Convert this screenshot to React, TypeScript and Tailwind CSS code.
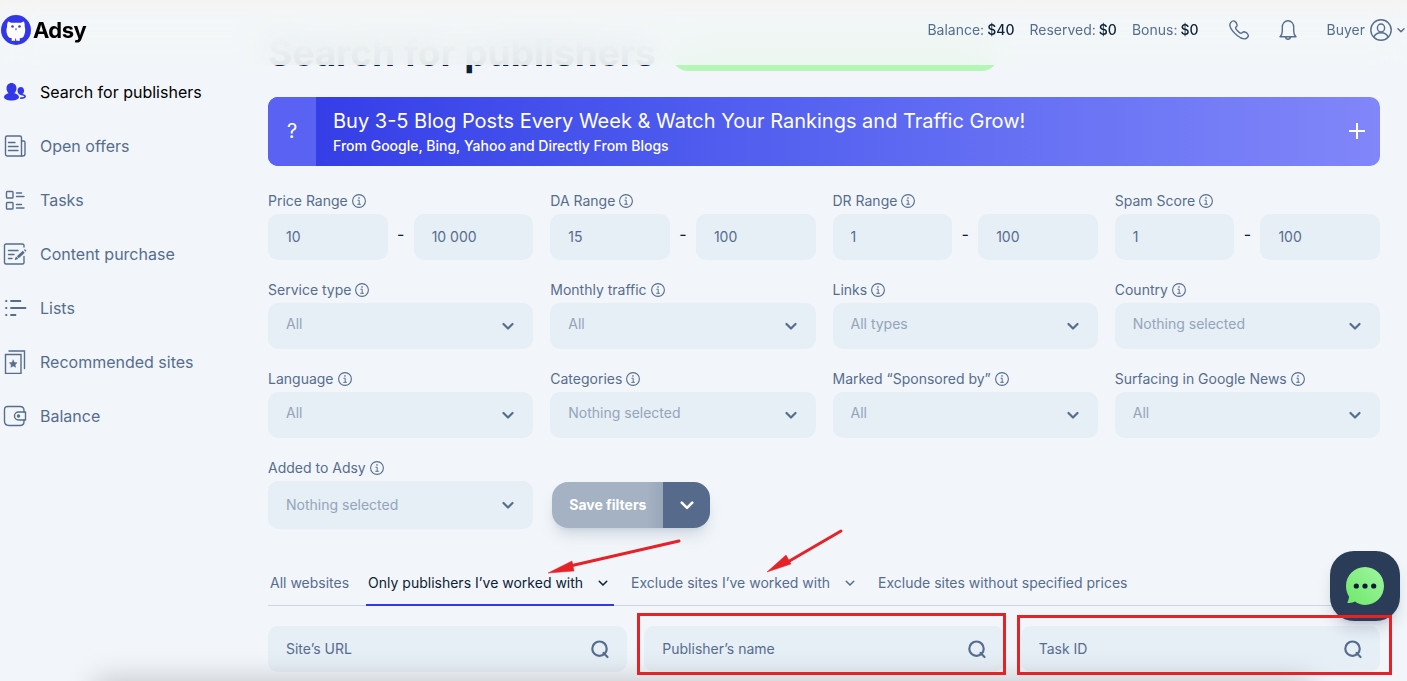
import type { ReactNode } from "react"

const navItems = [
  { label: "Search for publishers", icon: <PeopleIcon />, active: true },
  { label: "Open offers", icon: <OffersIcon /> },
  { label: "Tasks", icon: <TasksIcon /> },
  { label: "Content purchase", icon: <ContentIcon /> },
  { label: "Lists", icon: <ListsIcon /> },
  { label: "Recommended sites", icon: <RecommendedIcon /> },
  { label: "Balance", icon: <WalletIcon /> },
]

const ranges = [
  { id: "price", label: "Price Range", from: "10", to: "10 000" },
  { id: "da", label: "DA Range", from: "15", to: "100" },
  { id: "dr", label: "DR Range", from: "1", to: "100" },
  { id: "spam", label: "Spam Score", from: "1", to: "100" },
]

const selects = [
  { id: "service", label: "Service type", value: "All" },
  { id: "traffic", label: "Monthly traffic", value: "All" },
  { id: "links", label: "Links", value: "All types" },
  { id: "country", label: "Country", value: "Nothing selected" },
  { id: "language", label: "Language", value: "All" },
  { id: "categories", label: "Categories", value: "Nothing selected" },
  { id: "sponsored", label: "Marked “Sponsored by”", value: "All" },
  { id: "news", label: "Surfacing in Google News", value: "All" },
]

const tabs = [
  { label: "All websites" },
  { label: "Only publishers I’ve worked with", menu: true, active: true },
  { label: "Exclude sites I’ve worked with", menu: true },
  { label: "Exclude sites without specified prices" },
]

function LogoIcon() {
  return (
    <svg width="30" height="30" viewBox="0 0 30 30" aria-hidden="true">
      <circle cx="15" cy="15" r="15" fill="#3238e8" />
      <path
        d="M7 6.5c1 .2 2 .7 3 1.3h10c1-.6 2-1.1 3-1.3.6 2 .9 3.6.7 5.3.8 2.200.7 5-.3 7.700-.6 2.200-1.600 3.200-3.200 3.600l-1.600.2.300 2.200-1.300.5-.8-.6-.7.7-1-.6v-1.900h-.9v1.900l-1 .6-.7-.7-.8.6-1.200-.5.3-2.200-1.500-.3c-1.600-.4-2.500-1.500-3.100-3.500-1-2.700-1-5.500-.1-7.700C5.900 10 6.300 8.500 7 6.500z"
        fill="#fff"
      />
      <circle cx="11.500" cy="11.500" r="1.300" fill="#3238e8" />
      <circle cx="18.500" cy="11.500" r="1.300" fill="#3238e8" />
      <path d="M14 13.500h2l-1 2z" fill="#3238e8" />
    </svg>
  )
}

function PeopleIcon() {
  return (
    <svg width="24" height="24" viewBox="0 0 24 24" fill="#3238e8" aria-hidden="true">
      <path d="M8.500 3C5.600 3 3.500 5.300 3.500 8.300c0 2 .8 3.900 2.100 5C3.200 14 1 15.200 1 17c0 2.200 3.400 3.500 7.500 3.500S16 19.200 16 17c0-1.800-2.200-3-4.600-3.700 1.300-1.100 2.100-3 2.100-5C13.500 5.300 11.400 3 8.500 3z" />
      <path d="M17.800 7c-1.900 0-3.300 1.600-3.300 3.700 0 1.500.7 2.800 1.700 3.500l1.200.7 2-.8c1-.7 1.700-1.900 1.700-3.400 0-2.100-1.400-3.700-3.300-3.700z" />
      <path d="M18.500 14.500c2.300.3 3.600 1 3.600 1.900 0 1.100-1.500 1.600-4.300 1.700" fill="none" stroke="#3238e8" strokeWidth="1.600" strokeLinecap="round" />
    </svg>
  )
}

function Line({ children }: { children: ReactNode }) {
  return (
    <svg width="24" height="24" viewBox="0 0 24 24" fill="none" stroke="#566d8e" strokeWidth="1.400" strokeLinecap="round" strokeLinejoin="round" aria-hidden="true">
      {children}
    </svg>
  )
}

function OffersIcon() {
  return (
    <Line>
      <path d="M18.500 22H4.200a1.700 1.700 0 0 1-1.700-1.700V3.700C2.500 2.800 3.200 2 4.200 2h12.600c1 0 1.700.8 1.700 1.700V22z" />
      <path d="M18.500 7h2c.9 0 1.500.6 1.500 1.500v11.200c0 1.300-1 2.300-2.200 2.300h-1.300M5.500 8.500h6.500M5.500 12.500h9.500M5.500 16.500h9.500" />
    </Line>
  )
}

function TasksIcon() {
  return (
    <Line>
      <rect x="3.500" y="3.500" width="6.500" height="6.500" rx="0.800" />
      <rect x="3.500" y="14.500" width="6.500" height="6.500" rx="0.800" />
      <path d="M13.500 5h5M13.500 8.500h7.500M13.500 16.500h5M13.500 20h7.500" />
    </Line>
  )
}

function ContentIcon() {
  return (
    <Line>
      <path d="M21 5V3.500C21 2.700 20.400 2 19.500 2H3c-.9 0-1.500.7-1.500 1.500v17c0 .9.600 1.500 1.500 1.500h16.500c.9 0 1.500-.6 1.500-1.500V14.500M5.500 8.500H15M5.500 12.500H11M5.500 16.500H9" />
      <path d="M14.800 15.200l6-5.400" strokeWidth="2.800" strokeLinecap="butt" />
      <path d="M12.500 17.200l.8-1.600 1 1zM21.800 8l.8.800" />
    </Line>
  )
}

function ListsIcon() {
  return (
    <Line>
      <path d="M3 5h.5M3 12h.5M3 19h.5M8 5h9.500M8 12h14.500M8 19h4.500" strokeWidth="1.800" />
    </Line>
  )
}

function RecommendedIcon() {
  return (
    <Line>
      <path d="M2.500 4.500H18v19H2.500zM6 1h15.500v17.500" strokeLinejoin="miter" />
      <path d="M10.200 10l1.200 2.500 2.700.3-2 1.900.5 2.600-2.400-1.300-2.400 1.300.5-2.600-2-1.900 2.700-.3z" fill="#566d8e" strokeWidth="0.500" />
    </Line>
  )
}

function WalletIcon() {
  return (
    <Line>
      <path d="M21 8V6.500C21 4 19.500 2.500 17 2.500H4.500c-1.800 0-3 1.200-3 3V17c0 3 1.500 4.500 4.500 4.500h11c2.500 0 4-1.500 4-4V16" />
      <path d="M22.500 8H15.500a4 4 0 0 0 0 8h7z" />
      <circle cx="15.500" cy="12" r="1" fill="#566d8e" />
    </Line>
  )
}

function InfoIcon() {
  return (
    <svg width="14" height="14" viewBox="0 0 14 14" fill="none" stroke="#566d8e" aria-hidden="true">
      <circle cx="7" cy="7" r="6.400" strokeWidth="1.100" />
      <circle cx="7" cy="3.900" r="0.500" fill="#566d8e" strokeWidth="0.600" />
      <path d="M5.500 6.200h1.700v4M5.300 10.300h3.500" strokeWidth="1" />
    </svg>
  )
}

function Chevron({ size = 12, stroke = 2.2 }: { size?: number; stroke?: number }) {
  return (
    <svg width={size} height={size} viewBox="0 0 12 12" fill="none" stroke="currentColor" strokeWidth={stroke} strokeLinecap="round" strokeLinejoin="round" aria-hidden="true">
      <path d="M1.500 4l4.500 4.500L10.500 4" />
    </svg>
  )
}

function SearchIcon() {
  return (
    <svg width="20" height="20" viewBox="0 0 20 20" fill="none" stroke="#566d8e" strokeWidth="2.200" strokeLinecap="round" aria-hidden="true">
      <circle cx="9.500" cy="9.700" r="7.200" />
      <path d="M13.500 14l4 4" />
    </svg>
  )
}

function FieldLabel({ id, text }: { id: string; text: string }) {
  return (
    <label htmlFor={id} className="flex h-5 items-center gap-1 text-sm">
      {text}
      <InfoIcon />
    </label>
  )
}

function SelectField({ id, label, value, tall = false }: { id: string; label: string; value: string; tall?: boolean }) {
  return (
    <div className="flex flex-col gap-[3px]">
      <FieldLabel id={id} text={label} />
      <div className="relative">
        <select
          id={id}
          className={
            "block w-full appearance-none rounded-[10px] bg-[#e6eef6] px-[18px] text-sm text-[#93a5ba] " +
            (tall ? "h-12" : "h-[46px] pb-1")
          }
        >
          <option>{value}</option>
        </select>
        <span className="pointer-events-none absolute inset-y-0 right-[19px] flex items-center">
          <Chevron />
        </span>
      </div>
    </div>
  )
}

function SearchField({ label, mark }: { label: string; mark?: ReactNode }) {
  return (
    <div className="relative flex-1">
      <input
        aria-label={label}
        placeholder={label}
        className="block h-[46px] w-full rounded-[10px] bg-[#e6eef6] pr-12 pb-[2px] pl-[18px] text-sm placeholder:text-[#566d8e]"
      />
      <button aria-label={"Search " + label} className="absolute inset-y-0 right-[17px]">
        <SearchIcon />
      </button>
      {mark}
    </div>
  )
}

function Header() {
  return (
    <header className="fixed inset-x-0 top-0 z-10 flex h-[65px] items-center justify-between bg-linear-to-b from-[#f5f5f2]/90 to-[#f3f7f8]/90 to-30% pb-[5px] pl-px backdrop-blur-lg">
      <a href="#" className="flex items-center gap-[2px] text-[22px] font-bold tracking-tight text-black">
        <LogoIcon />
        Adsy
      </a>
      <div className="flex items-center gap-[30px] pr-[2px] text-sm">
        <dl className="flex gap-[15px]">
          <div className="flex gap-[3px]">
            <dt>Balance:</dt>
            <dd className="font-medium text-[#0c2135]">$40</dd>
          </div>
          <div className="flex gap-[3px]">
            <dt>Reserved:</dt>
            <dd className="font-medium text-[#0c2135]">$0</dd>
          </div>
          <div className="flex gap-[3px]">
            <dt>Bonus:</dt>
            <dd className="font-medium text-[#0c2135]">$0</dd>
          </div>
        </dl>
        <button aria-label="Call us">
          <svg width="20" height="20" viewBox="0 0 20 20" fill="none" stroke="#566d8e" strokeWidth="1.400" strokeLinejoin="round" aria-hidden="true">
            <path d="M2 2.300C3 1.200 4.500.6 5.600 1.200c1.200.8 2.300 2.600 2.500 3.800.2 1.300-1.300 1.800-1.500 2.800-.2 1.300 3.900 5.500 5.400 5.600 1.200 0 1.700-1.700 3-1.600 1.400.2 3.400 1.500 4 2.700.6 1.100-.2 2.800-1.300 3.600-2 1.400-5 1.100-9.200-2.300C5 12.900 1.700 9 1 6.200.6 4.500 1 3.300 2 2.300z" />
          </svg>
        </button>
        <button aria-label="Notifications">
          <svg width="18" height="20" viewBox="0 0 18 20" fill="none" stroke="#566d8e" strokeWidth="1.400" strokeLinecap="round" strokeLinejoin="round" aria-hidden="true">
            <path d="M1 16.800c1.800-1.600 2.300-3 2.300-5.800V7.200C3.300 3.600 5.700.8 9 .8s5.700 2.800 5.700 6.400V11c0 2.800.5 4.200 2.300 5.800zM6.500 17c.3 1.400 1.200 2.200 2.500 2.200s2.200-.8 2.500-2.200" />
          </svg>
        </button>
        <button className="flex items-center gap-[5px]">
          Buyer
          <svg width="22" height="22" viewBox="0 0 22 22" fill="none" stroke="#566d8e" strokeWidth="1.400" aria-hidden="true">
            <circle cx="11" cy="11" r="10.200" />
            <ellipse cx="11" cy="9" rx="3.600" ry="4" />
            <path d="M4 18c1-3 3.500-4.300 7-4.300s6 1.300 7 4.300" />
          </svg>
          <Chevron size={8} />
        </button>
      </div>
    </header>
  )
}

function Sidebar() {
  return (
    <nav className="w-[268px] shrink-0 pt-[65px]">
      {navItems.map((item) => (
        <a
          key={item.label}
          href="#"
          className={"flex h-[54px] items-center gap-[13px] pl-[3px] text-base " + (item.active ? "text-black" : "")}
        >
          {item.icon}
          {item.label}
        </a>
      ))}
    </nav>
  )
}

function Banner() {
  return (
    <section className="flex h-[69px] overflow-hidden rounded-[10px] bg-linear-to-r from-[#3339e6] to-[#8186f9] text-white">
      <div className="flex w-12 items-center justify-center bg-[#5a62f3] pb-[2px] text-xl">?</div>
      <div className="flex flex-1 flex-col justify-center pl-[17px]">
        <h2 className="text-xl leading-7">Buy 3-5 Blog Posts Every Week &amp; Watch Your Rankings and Traffic Grow!</h2>
        <p className="text-sm leading-[22px] font-medium">From Google, Bing, Yahoo and Directly From Blogs</p>
      </div>
      <button aria-label="Expand" className="px-[15px] pb-[2px]">
        <svg width="16" height="16" viewBox="0 0 16 16" stroke="#fff" strokeWidth="2" aria-hidden="true">
          <path d="M8 0v16M0 8h16" />
        </svg>
      </button>
    </section>
  )
}

/* Hand-drawn style pointers over the tab row */
function Arrows() {
  return (
    <svg width="300" height="50" viewBox="0 0 300 50" className="pointer-events-none absolute -top-[38px] left-[278px] z-20" stroke="#e52228" fill="#e52228" aria-hidden="true">
      <path d="M133 14L24 39" strokeWidth="3" strokeLinecap="round" />
      <path d="M2 46l24-12 2 10z" strokeWidth="0.500" />
      <path d="M295 4L240 36" strokeWidth="3" strokeLinecap="round" />
      <path d="M221 45l19-17 5 9z" strokeWidth="0.500" />
    </svg>
  )
}

function Tabs() {
  return (
    <div className="relative mt-9">
      <Arrows />
      <div role="tablist" className="flex gap-[15px] border-b border-[#ccd6e2]">
        {tabs.map((tab) => (
          <button
            key={tab.label}
            role="tab"
            aria-selected={!!tab.active}
            className={
              "-mb-px flex h-[41px] items-center gap-[15px] border-b-2 pb-[3px] pl-[2px] text-sm " +
              (tab.active ? "border-[#3238e8] text-[#0c2135] " : "border-transparent ") +
              (tab.menu ? "pr-[6px]" : "pr-[2px]")
            }
          >
            {tab.label}
            {tab.menu && <Chevron size={10} stroke={1.8} />}
          </button>
        ))}
      </div>
    </div>
  )
}

function ChatButton() {
  return (
    <button
      aria-label="Open chat"
      className="fixed right-[7px] bottom-[60px] z-10 flex size-[70px] items-center justify-center rounded-[24px] bg-[#2a3c58] shadow-lg shadow-[#2a3c58]/20"
    >
      <svg width="40" height="40" viewBox="0 0 40 40" aria-hidden="true">
        <defs>
          <linearGradient id="bubble" x1="1" y1="0" x2="0" y2="1">
            <stop offset="0" stopColor="#a0f5a0" />
            <stop offset="1" stopColor="#6fe86a" />
          </linearGradient>
        </defs>
        <path d="M20 1C9.500 1 1 9.500 1 20c0 4 1.200 7.500 3 10.500 0 2-.6 4-1.800 6.300 3 .5 5.600 0 7.800-1.200 3 2.100 6.300 3.400 10 3.400 10.500 0 19-8.500 19-19S30.500 1 20 1z" fill="url(#bubble)" />
        <circle cx="11.300" cy="20" r="2.600" fill="#081c38" />
        <circle cx="20" cy="20" r="2.600" fill="#081c38" />
        <circle cx="28.700" cy="20" r="2.600" fill="#081c38" />
      </svg>
    </button>
  )
}

export default function App() {
  return (
    <div className="flex min-h-screen bg-[#f2f6fa] font-['Inter',sans-serif] text-[#566d8e]">
      <Header />
      <Sidebar />

      <main className="min-w-0 flex-1 pt-[31px] pr-[27px] pb-[9px]">
        <div className="mb-[22px] flex items-end gap-4">
          <h1 className="text-[37px] leading-[44px] font-bold text-[#0c2135]">Search for publishers</h1>
          <div className="mb-1 h-8 w-[326px] rounded-2xl bg-[#b5f5b5]" />
        </div>

        <Banner />

        <div className="mt-[25px] grid grid-cols-4 gap-x-[17px] gap-y-5">
          {ranges.map((r) => (
            <div key={r.id} className="flex flex-col gap-[3px]">
              <FieldLabel id={r.id} text={r.label} />
              <div className="flex">
                <input
                  id={r.id}
                  defaultValue={r.from}
                  className="h-[46px] w-full min-w-0 flex-1 rounded-[10px] bg-[#e6eef6] px-[18px] pb-[2px] text-sm"
                />
                <span className="w-[26px] pt-2 text-center text-base text-[#0c2135]">-</span>
                <input
                  aria-label={r.label + " to"}
                  defaultValue={r.to}
                  className="h-[46px] w-full min-w-0 flex-1 rounded-[10px] bg-[#e6eef6] px-[18px] pb-[2px] text-sm"
                />
              </div>
            </div>
          ))}

          {selects.map((s) => (
            <SelectField key={s.id} id={s.id} label={s.label} value={s.value} />
          ))}

          <SelectField id="added" label="Added to Adsy" value="Nothing selected" tall />
          <div className="flex items-end pb-px pl-[2px]">
            <div className="flex h-[46px] overflow-hidden rounded-2xl text-white shadow-lg shadow-[#566d8e]/20">
              <button className="bg-linear-to-r from-[#a5b2c3] from-85% to-[#98a7bb] px-[17px] text-sm font-bold">Save filters</button>
              <button aria-label="More filter actions" className="flex w-[47px] items-center justify-center bg-[#566b8b]">
                <Chevron size={14} />
              </button>
            </div>
          </div>
        </div>

        <Tabs />

        <div className="mt-5 flex gap-[17px]">
          <SearchField label="Site’s URL" />
          <SearchField
            label="Publisher’s name"
            mark={<span className="pointer-events-none absolute -top-[13px] -right-[2px] -bottom-[3px] -left-[7px] z-20 border-3 border-[#e52228]" />}
          />
          <SearchField
            label="Task ID"
            mark={<span className="pointer-events-none absolute -top-[11px] -right-[12px] -bottom-[3px] -left-[4px] z-20 border-3 border-[#e52228]" />}
          />
        </div>
      </main>

      {/* shadow of the bar sitting under the fold */}
      <div className="pointer-events-none fixed right-[97px] -bottom-10 left-[95px] z-10 h-10 bg-white shadow-[0_0_30px_0_rgba(0,0,0,0.22)]" />
      <ChatButton />
    </div>
  )
}
